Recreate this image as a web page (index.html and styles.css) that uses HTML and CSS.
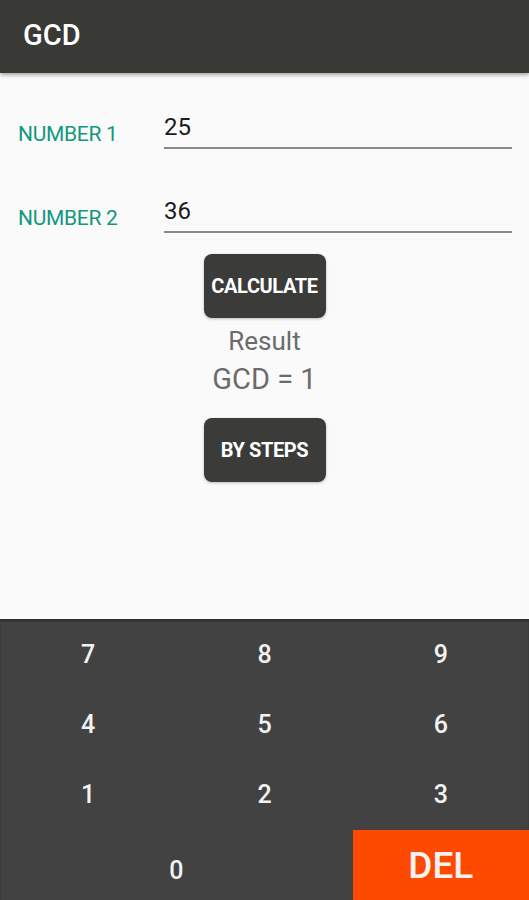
FILE: index.html
```html
<!DOCTYPE html>
<html lang="en">
<head>
  <meta charset="UTF-8" />
  <meta name="viewport" content="width=device-width, initial-scale=1.0"/>
  <title>GCD</title>
  <link rel="stylesheet" href="styles.css">
</head>
<body>
  <div class="app">
    <header class="toolbar">GCD</header>

    <main class="content">
      <div class="field-row">
        <label for="num1">NUMBER 1</label>
        <input type="text" id="num1" value="25" readonly />
      </div>
      <div class="field-row field-row-last">
        <label for="num2">NUMBER 2</label>
        <input type="text" id="num2" value="36" readonly />
      </div>

      <button class="action">CALCULATE</button>

      <div class="result">
        <div class="result-title">Result</div>
        <div class="result-value">GCD = 1</div>
      </div>

      <button class="action">BY STEPS</button>
    </main>

    <div class="keypad">
      <button class="key">7</button>
      <button class="key">8</button>
      <button class="key">9</button>
      <button class="key">4</button>
      <button class="key">5</button>
      <button class="key">6</button>
      <button class="key">1</button>
      <button class="key">2</button>
      <button class="key">3</button>
      <button class="key key-zero">0</button>
      <button class="key key-del">DEL</button>
    </div>
  </div>
</body>
</html>
```

FILE: styles.css
```css
* {
  box-sizing: border-box;
  font-family: Roboto, 'Noto Sans', sans-serif;
}

body {
  margin: 0;
  padding: 0;
  background-color: #fafafa;
}

.app {
  display: flex;
  flex-direction: column;
  height: 100vh;
}

.toolbar {
  height: 73px;
  flex-shrink: 0;
  background-color: #393a36;
  color: #ffffff;
  font-size: 29px;
  font-weight: 500;
  padding: 18px 0 0 23px;
  box-shadow: 0 2px 4px rgba(0, 0, 0, 0.35);
  position: relative;
  z-index: 1;
}

.content {
  flex: 1;
  display: flex;
  flex-direction: column;
  align-items: center;
  padding-top: 26px;
}

.field-row {
  width: 100%;
  height: 50px;
  display: flex;
  align-items: flex-end;
  margin-bottom: 34px;
  padding-right: 17px;
}

.field-row-last {
  margin-bottom: 21px;
}

.field-row label {
  width: 164px;
  flex-shrink: 0;
  padding: 0 0 3px 18px;
  color: #13977f;
  font-size: 21px;
  letter-spacing: -0.3px;
}

.field-row input {
  flex: 1;
  height: 50px;
  padding: 8px 0 0 0;
  border: none;
  border-bottom: 2px solid #8a8a8a;
  background: transparent;
  font-size: 24px;
  color: #1c1c1c;
  outline: none;
}

.action {
  width: 122px;
  height: 64px;
  flex-shrink: 0;
  border: none;
  border-radius: 8px;
  background-color: #3b3b39;
  color: #ffffff;
  font-size: 20px;
  font-weight: 700;
  letter-spacing: -0.4px;
  box-shadow: 0 1px 3px rgba(0, 0, 0, 0.25);
  cursor: pointer;
}

.result {
  text-align: center;
  color: #6b6b6b;
  padding: 8px 0 16px;
}

.result-title {
  font-size: 26px;
  line-height: 30px;
}

.result-value {
  font-size: 29px;
  line-height: 46px;
}

.keypad {
  height: 281px;
  flex-shrink: 0;
  display: grid;
  grid-template-columns: repeat(3, 1fr);
  grid-template-rows: repeat(4, 1fr);
  background-color: #424242;
  box-shadow: inset 0 2px 2px rgba(0, 0, 0, 0.3);
}

.key {
  border: none;
  background: transparent;
  color: #f2f2f2;
  font-size: 25px;
  font-weight: 500;
  cursor: pointer;
}

.key-zero {
  grid-column: span 2;
  padding-top: 12px;
}

.key-del {
  background-color: #fe4a00;
  font-size: 37px;
  padding-top: 2px;
}
```
